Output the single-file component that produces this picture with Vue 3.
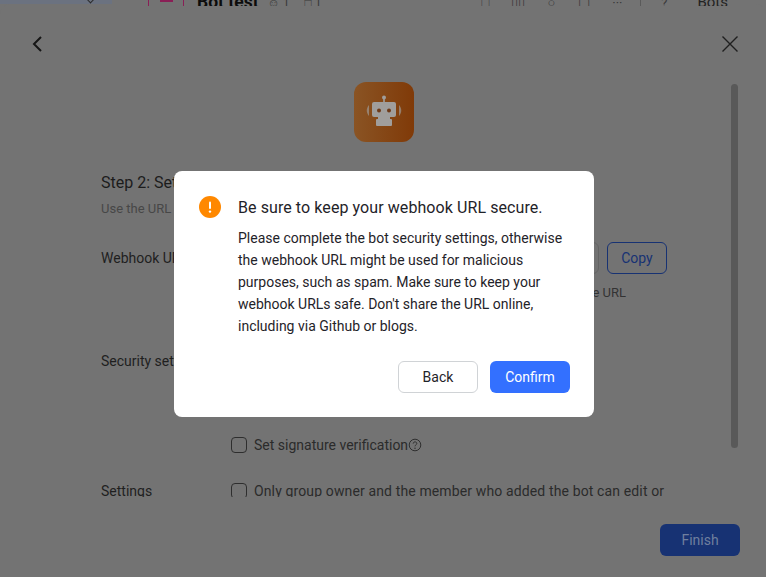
<template>
  <div class="page">
    <div class="app-bar">
      <div class="sidebar"><span class="chevron"></span></div>
      <div class="chat-title">
        <span class="avatar"><span class="avatar-dot"></span></span>
        <span class="chat-name">Bot test</span>
        <span class="count">&#9786; 1</span>
        <span class="count">&#9633; 1</span>
      </div>
      <div class="bar-tools">
        <span class="tool">&#9633;</span>
        <span class="tool">&#9647;&#9647;</span>
        <span class="tool">&#9675;</span>
        <span class="tool">&#9634;</span>
        <span class="tool">&middot;&middot;&middot;</span>
        <span class="bar-sep"></span>
        <span class="tool">?</span>
        <span class="bots">Bots</span>
      </div>
    </div>

    <section class="drawer">
      <header class="drawer-head">
        <svg class="head-icon" viewBox="0 0 20 20" width="20" height="20">
          <path d="M14 3 7 10l7 7" fill="none" stroke="#161616" stroke-width="2" />
        </svg>
        <svg class="head-icon" viewBox="0 0 20 20" width="20" height="20">
          <path d="M2.5 2.5l15 15M17.5 2.500l-15 15" fill="none" stroke="#1f1f1f" stroke-width="1.4" />
        </svg>
      </header>

      <div class="drawer-body">
        <div class="logo">
          <svg viewBox="0 0 40 40" width="40" height="40">
            <circle cx="20" cy="5.5" r="2" fill="#a09e9c" />
            <rect x="19.2" y="6" width="1.6" height="5" fill="#a09e9c" />
            <rect x="8" y="10" width="24" height="15" rx="2" fill="#a09e9c" />
            <rect x="14" y="24" width="12" height="4" fill="#a09e9c" />
            <rect x="12" y="27" width="16" height="7" rx="1" fill="#a09e9c" />
            <circle cx="15" cy="18.5" r="2" fill="#6e3a18" />
            <circle cx="25" cy="18.5" r="2" fill="#6e3a18" />
            <path d="M5 13c-3 3.500-3 7.500 0 11z" fill="#a09e9c" opacity=".65" />
            <path d="M35 13c3 3.500 3 7.500 0 11z" fill="#a09e9c" opacity=".65" />
          </svg>
        </div>

        <h2 class="step-title">Step 2: Set up webhook</h2>
        <p class="step-desc">Use the URL below to send messages to the group</p>

        <div class="form-row webhook-row">
          <span class="row-label">Webhook URL</span>
          <div class="row-field">
            <div class="url-line">
              <span class="url-input">https://open.feishu.cn/hook</span>
              <button class="copy-btn">Copy</button>
            </div>
            <p class="url-help">Keep this address private and do not publish the URL</p>
          </div>
        </div>

        <div class="form-row security-row">
          <span class="row-label">Security settings</span>
          <div class="row-field">
            <label class="check-line"><span class="check"></span>Custom keywords</label>
            <label class="check-line"><span class="check"></span>IP whitelist</label>
            <label class="check-line">
              <span class="check"></span>Set signature verification
              <svg class="help" viewBox="0 0 14 14" width="14" height="14">
                <circle cx="7" cy="7" r="5.8" fill="none" stroke="#2f2f2f" stroke-width="1" />
                <path d="M5.2 5.6c0-2.3 3.6-2.3 3.6-.1 0 1.300-1.800 1.400-1.800 2.800" fill="none" stroke="#2f2f2f" stroke-width="1" />
                <circle cx="7" cy="10.2" r=".7" fill="#2f2f2f" />
              </svg>
            </label>
          </div>
        </div>

        <div class="form-row settings-row">
          <span class="row-label">Settings</span>
          <div class="row-field">
            <label class="check-line owner-line"><span class="check"></span>Only group owner and the member who added the bot can edit or</label>
          </div>
        </div>

        <div class="scroll-thumb"></div>
      </div>

      <footer class="drawer-foot">
        <button class="finish-btn">Finish</button>
      </footer>
    </section>

    <div class="dialog">
      <svg class="warn-icon" viewBox="0 0 22 22" width="22" height="22">
        <circle cx="11" cy="11" r="11" fill="#ff8800" />
        <rect x="10" y="5.5" width="2" height="7.5" rx="1" fill="#fff" />
        <circle cx="11" cy="15.6" r="1.2" fill="#fff" />
      </svg>
      <div class="dialog-main">
        <h3 class="dialog-title">Be sure to keep your webhook URL secure.</h3>
        <p class="dialog-text">
          Please complete the bot security settings, otherwise the webhook URL might be used for malicious purposes, such as spam. Make sure to keep your webhook URLs safe. Don't share the URL online, including via Github or blogs.
        </p>
        <div class="dialog-actions">
          <button class="back-btn">Back</button>
          <button class="confirm-btn">Confirm</button>
        </div>
      </div>
    </div>
  </div>
</template>

<script setup>
</script>

<style>
html,
body {
  margin: 0;
  background: #737373;
}
</style>

<style scoped>
.page {
  position: relative;
  width: 766px;
  height: 577px;
  overflow: hidden;
  background: #737373;
  font-family: Roboto, "Open Sans", sans-serif;
  color: #1f1f1f;
}

/* only the bottom of the app bar peeks out above the drawer */
.app-bar {
  position: relative;
  z-index: 1;
  display: flex;
  height: 6px;
  overflow: hidden;
}

.sidebar {
  width: 112px;
  height: 4px;
  overflow: hidden;
  background: #6b7280;
  flex: none;
  box-sizing: border-box;
  padding-left: 87px;
}

.chevron {
  display: block;
  width: 6px;
  height: 6px;
  margin-top: -5px;
  border-right: 1px solid #2a2a2a;
  border-bottom: 1px solid #2a2a2a;
  transform: rotate(45deg);
}

.chat-title {
  flex: 1;
  display: flex;
  align-items: flex-start;
  padding-left: 36px;
  margin-top: -9px;
}

.avatar {
  position: relative;
  width: 36px;
  height: 24px;
  border-left: 1px solid #8a1f56;
  border-right: 1px solid #8a1f56;
  box-sizing: border-box;
  flex: none;
}

.avatar-dot {
  position: absolute;
  left: 11px;
  top: 9px;
  width: 13px;
  height: 2px;
  background: #8a1f56;
}

.chat-name {
  font-weight: 700;
  font-size: 17.5px;
  line-height: 22px;
  color: #0c0c0c;
  margin-left: 13px;
}

.count {
  margin-left: 9px;
  font-size: 12px;
  line-height: 24px;
  color: #3a3a3a;
}

.count + .count {
  margin-left: 15px;
}

.bar-tools {
  display: flex;
  align-items: flex-start;
  gap: 13px;
  padding-right: 38px;
  margin-top: -9px;
}

.tool {
  width: 20px;
  text-align: center;
  font-size: 13px;
  line-height: 24px;
  color: #3a3a3a;
}

.bar-sep {
  width: 1px;
  height: 20px;
  background: #5a5a5a;
}

.bots {
  margin-left: 10px;
  font-size: 15px;
  line-height: 22px;
  color: #222;
}

.drawer {
  position: absolute;
  left: 0;
  right: 0;
  top: 4px;
  bottom: 0;
  background: #737373;
  border-radius: 10px 10px 0 0;
  display: flex;
  flex-direction: column;
}

.drawer-head {
  display: flex;
  justify-content: space-between;
  padding: 30px 26px 0 27px;
  height: 51px;
  box-sizing: border-box;
}

.drawer-body {
  position: relative;
  flex: 1;
  min-height: 0;
  overflow: hidden;
  padding: 27px 99px 0 101px;
}

.logo {
  width: 60px;
  height: 60px;
  margin: 0 auto;
  border-radius: 12px;
  background: linear-gradient(90deg, #8a5424, #803a08);
  display: flex;
  align-items: center;
  justify-content: center;
}

.step-title {
  margin: 32px 0 0;
  font-size: 16px;
  font-weight: 400;
  line-height: 18px;
  color: #1c1c1c;
}

.step-desc {
  margin: 8px 0 0;
  font-size: 13px;
  line-height: 18px;
  color: #474747;
  white-space: nowrap;
}

.form-row {
  display: flex;
  font-size: 14px;
  line-height: 20px;
  color: #1f1f1f;
}

.row-label {
  width: 130px;
  flex: none;
  white-space: nowrap;
}

.row-field {
  flex: 1;
  min-width: 0;
}

.webhook-row {
  margin-top: 24px;
}

.webhook-row .row-label {
  padding-top: 6px;
}

.url-line {
  display: flex;
  gap: 8px;
}

.url-input {
  flex: 1;
  height: 32px;
  box-sizing: border-box;
  border: 1px solid #646464;
  border-radius: 6px;
  padding: 5px 11px;
  white-space: nowrap;
  overflow: hidden;
  color: #333;
}

.copy-btn {
  width: 60px;
  height: 32px;
  flex: none;
  background: transparent;
  border: 1px solid #173273;
  border-radius: 6px;
  color: #173273;
  font: inherit;
  padding: 0;
}

.url-help {
  margin: 9px 0 0;
  font-size: 13px;
  line-height: 20px;
  color: #333;
  white-space: nowrap;
  padding-right: 41px;
  text-align: right;
}

.security-row {
  margin-top: 48px;
}

.security-row .row-field {
  display: flex;
  flex-direction: column;
  gap: 22px;
}

.check-line {
  display: flex;
  align-items: center;
  white-space: nowrap;
  font-size: 14px;
  color: #2b2b2b;
}

.owner-line {
  letter-spacing: 0.13px;
}

.check {
  width: 16px;
  height: 16px;
  box-sizing: border-box;
  flex: none;
  border: 1px solid #2e2e2e;
  border-radius: 4px;
  margin-right: 7px;
}

.settings-row {
  margin-top: 26px;
}

.scroll-thumb {
  position: absolute;
  right: 28px;
  top: 29px;
  width: 7px;
  height: 364px;
  border-radius: 4px;
  background: #595959;
}

.drawer-foot {
  display: flex;
  justify-content: flex-end;
  padding: 27px 26px 21px 0;
}

.finish-btn {
  width: 80px;
  height: 32px;
  border: none;
  border-radius: 6px;
  background: #173273;
  color: #6f7f9e;
  font: inherit;
  font-size: 14px;
  padding: 0;
}

.dialog {
  position: absolute;
  z-index: 2;
  left: 174px;
  top: 171px;
  width: 420px;
  height: 246px;
  box-sizing: border-box;
  background: #fff;
  border-radius: 8px;
  padding: 25px 24px 24px 25px;
  display: flex;
  gap: 17px;
}

.warn-icon {
  flex: none;
}

.dialog-main {
  flex: 1;
  min-width: 0;
}

.dialog-title {
  margin: 1px 0 0;
  font-size: 16px;
  font-weight: 400;
  line-height: 22px;
  letter-spacing: 0.08px;
  color: #1f2329;
}

.dialog-text {
  margin: 8px 0 0;
  font-size: 14px;
  line-height: 22px;
  color: #1f2329;
}

.dialog-actions {
  display: flex;
  justify-content: flex-end;
  gap: 12px;
  margin-top: 24px;
}

.back-btn,
.confirm-btn {
  width: 80px;
  height: 32px;
  border-radius: 6px;
  font: inherit;
  font-size: 14px;
  padding: 0;
  box-sizing: border-box;
}

.back-btn {
  background: #fff;
  border: 1px solid #d0d3d6;
  color: #1f2329;
}

.confirm-btn {
  background: #3370ff;
  border: none;
  color: #fff;
}
</style>
